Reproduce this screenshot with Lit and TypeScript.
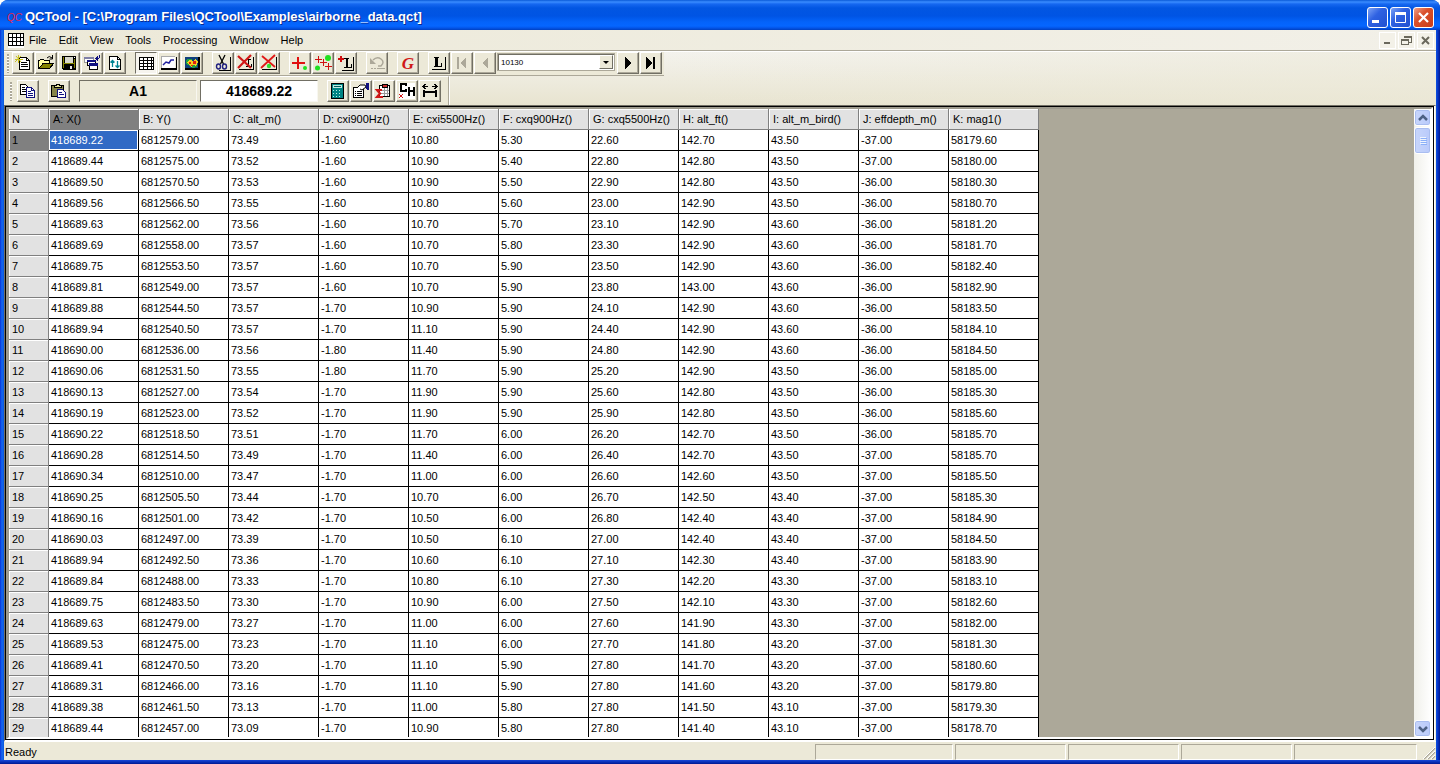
import { LitElement, html, css, svg, nothing } from "lit";
import { customElement, property } from "lit/decorators.js";
import { classMap } from "lit/directives/class-map.js";

/* 16 x 16 pixel glyphs used by the toolbars */
const GLYPHS: Record<string, unknown> = {
  new: svg`
    <path d="M4.500 2.500h7l3 3v9h-10z" fill="#fff" stroke="#000" />
    <path d="M11.500 2.500v3h3" fill="none" stroke="#000" />
    <path d="M6 7.500h6M6 9.500h7M6 11.500h7" stroke="#000" />
    <path d="M3.500 0v8M0 4.500h8M1 1l5 6M6 1L0 7" stroke="#c8c020" shape-rendering="auto" />`,
  open: svg`
    <path d="M.5 13.500v-8h1l1-1h3l1 1h5v3" fill="#ffffa0" stroke="#000" />
    <path d="M1 13.500l4-5h10.500l-4 5z" fill="#848400" stroke="#000" />
    <path d="M9 3q2-3 5 0M14.500 0v4h-3" fill="none" stroke="#000" shape-rendering="auto" />`,
  save: svg`
    <path d="M1.500 1.500h13v13h-12l-1-1z" fill="#000" stroke="#000" />
    <path d="M2 2h1v11H2zM13 4h1v9h-1zM3 8h10v1H3z" fill="#848400" />
    <rect x="4" y="2" width="8" height="6" fill="#d8d8cc" />
    <rect x="13" y="2" width="1" height="1" fill="#fff" />
    <rect x="9" y="11" width="2" height="3" fill="#e8e8e8" />`,
  cascade: svg`
    <path d="M.5 2.500h9v5h-9z" fill="#fff" stroke="#999" /><path d="M0 2h10v2H0z" fill="#8080a8" />
    <path d="M3.500 5.500h8v5h-8z" fill="#fff" stroke="#000" /><path d="M3 5h9v2H3z" fill="#101080" />
    <path d="M5.500 9.500h8v5h-8z" fill="#fff" stroke="#000" /><path d="M5 8h9v3H5z" fill="#101080" />
    <path d="M12 3.500h3M11.500 3.500l2-2v4zM15.500 0v3" stroke="#101080" fill="#101080" />`,
  reload: svg`
    <path d="M2.500 1.500h8l3 3v10h-11z" fill="#fff" stroke="#000" />
    <path d="M10.500 1.500v3h3" fill="none" stroke="#000" />
    <path d="M5.500 5v7M3.500 7.500l2-2 2 2M10.500 6v7M8.500 10.500l2 2 2-2" fill="none" stroke="#008494" stroke-width="1.300" shape-rendering="auto" />`,
  table: svg`
    <path d="M1 2h14v12H1z" fill="#fff" />
    <path d="M1 2.500h14M1 5.500h14M1 8.500h14M1 11.500h14M1.500 2v12M5.500 2v12M9.500 2v12M13.500 2v12" stroke="#000" />
    <path d="M1 14h15v1H1zM15 2h1v13h-1z" fill="#000" />`,
  chart: svg`
    <path d="M0 1h14v12H0z" fill="#fff" /><path d="M0 13h16v2H0zM15 2h1v13h-1z" fill="#000" />
    <path d="M0 1.500h14M.5 1v12" stroke="#aaa" />
    <path d="M2 10l3-3 3 1 2-3h3" fill="none" stroke="#2020a0" stroke-width="1.500" shape-rendering="auto" />`,
  map: svg`
    <path d="M1 2h14v12H1z" fill="#10407c" />
    <path d="M2 5q4-3 6 0t5-1v8l-4 1-7-4z" fill="#20a040" />
    <path d="M3 7l3-2 3 1 3-2 2 3-2 4-3-1-2 2-3-3z" fill="#f0d020" />
    <path d="M5 7h2v2H5zM9 6h3v3H9zM7 10h2v1H7z" fill="#e02010" />
    <path d="M1 13h15v2H1zM14 2h2v13h-2z" fill="#000" />`,
  cut: svg`
    <g shape-rendering="auto" fill="none">
      <path d="M4 0l4.500 9M10 0L5.500 9" stroke="#000" stroke-width="1.300" />
      <ellipse cx="3.500" cy="11.500" rx="2" ry="2.500" stroke="#202080" stroke-width="1.400" />
      <ellipse cx="9.500" cy="11.500" rx="2" ry="2.500" stroke="#202080" stroke-width="1.400" />
    </g><path d="M4 15h12v1H4zM15 2h1v14h-1z" fill="#000" />`,
  cutLine: svg`
    <path d="M1 14h15v1H1zM15 2h1v13h-1z" fill="#000" />
    <path d="M8 4.500h5M10.500 4v7M8 11.500h5V9" stroke="#000" fill="none" />
    <path d="M0 1l13 12M13 0L0 13" stroke="#d01818" stroke-width="2.200" shape-rendering="auto" />`,
  cutPoint: svg`
    <path d="M1 14h15v1H1zM15 2h1v13h-1z" fill="#000" />
    <path d="M1 1l13 11M14 0L0 13" stroke="#e01818" stroke-width="1.800" shape-rendering="auto" />
    <circle cx="8" cy="11" r="2.200" fill="#30e030" shape-rendering="auto" />`,
  addPoint: svg`
    <path d="M5 2h2v5h6v2H7v5H5V9H0V7h5z" fill="#e01010" />
    <circle cx="13" cy="13" r="2" fill="#20e020" shape-rendering="auto" />`,
  addPoints: svg`
    <circle cx="13" cy="3" r="3" fill="#20e020" shape-rendering="auto" />
    <circle cx="2.500" cy="13" r="2.500" fill="#20e020" shape-rendering="auto" />
    <path d="M3.500 1v7M0 4.500h7M8.500 4v7M5 7.500h7M13.500 8v7M10 11.500h7" stroke="#d01010" />`,
  addLine: svg`
    <path d="M2 1h2v2h2v2H4v2H2V5H0V3h2z" fill="#d01010" />
    <path d="M6 3h5v1h-1v8h3V9h1v4H6v-1h2V4H6z" fill="#000" />
    <path d="M4 15h12v1H4zM15 2h1v14h-1z" fill="#000" />`,
  undo: svg`
    <g shape-rendering="auto">
      <path d="M1 9V3l6 6z" fill="#aca899" />
      <path d="M4 5Q8 1 12 4t0 7H9" fill="none" stroke="#aca899" stroke-width="1.500" />
    </g><path d="M2 13.500h2m1 0h2m1 0h8" stroke="#aca899" />`,
  goto: svg`<text x="8" y="14" text-anchor="middle" class="g">G</text>`,
  line: svg`
    <path d="M3 2h5v1H7v8h3V8h1v4H3v-1h1V3H3z" fill="#000" />
    <path d="M1 14h14v1H1zM14 2h1v13h-1z" fill="#000" />`,
  first: svg`<path d="M3 2h2v12H3zM12 2v12L6 8z" fill="#aca899" />`,
  prev: svg`<path d="M11 2v12L5 8z" fill="#aca899" />`,
  next: svg`<path d="M5 2v12l7-6z" fill="#000" />`,
  last: svg`<path d="M3 2v12l7-6zM10 2h2v12h-2z" fill="#000" />`,
  copy: svg`
    <path d="M.5 1.500h5l3 3v7h-8z" fill="#fff" stroke="#000" />
    <path d="M2 4.500h3M2 6.500h4M2 8.500h4" stroke="#000" />
    <path d="M6.500 4.500h5l3 3v7h-8z" fill="#fff" stroke="#101080" />
    <path d="M11.500 4.500v3h3M8 8.500h3M8 10.500h5M8 12.500h5" stroke="#101080" fill="none" />`,
  paste: svg`
    <path d="M.5 2.500h12v11H.5z" fill="#848448" stroke="#000" />
    <path d="M3 4V2h2V1h3v1h2v2z" fill="#e8e4a0" stroke="#000" />
    <path d="M6.500 6.500h5l3 3v5h-8z" fill="#fff" stroke="#101080" />
    <path d="M8 9.500h3M8 11.500h5" stroke="#101080" />`,
  calc: svg`
    <path d="M1.500 .5h12v15h-12z" fill="#008484" stroke="#000" />
    <path d="M3 2h9v3H3z" fill="#c0e8e0" /><path d="M4 3h7v1H4z" fill="#006060" />
    <path d="M3 7.500h9M3 10.500h9M3 13.500h9" stroke="#b8f0e8" stroke-dasharray="1 2" />`,
  props: svg`
    <path d="M.5 4.500h10v10H.5z" fill="#fff" stroke="#000" />
    <path d="M2 8.500h1M4 8.500h5M2 10.500h1M4 10.500h5M2 12.500h1M4 12.500h5" stroke="#000" />
    <path d="M4 5l3-3h5l1 2-4 3-2-1" fill="#fff" stroke="#000" shape-rendering="auto" />
    <path d="M13 0h3v7h-2l-1-2z" fill="#101080" />`,
  sum: svg`
    <path d="M3.500 2.500h10v11h-10z" fill="#fff" stroke="#000" />
    <path d="M6 4V1h5v3z" fill="#c83030" stroke="#000" />
    <path d="M5 7.500h8M5 10.500h8M8.500 5v8M11.500 5v8" stroke="#999" />
    <path d="M6 7H1l3 3.500L1 14h6" fill="none" stroke="#d01818" stroke-width="2.200" shape-rendering="auto" />`,
  channel: svg`
    <path d="M0 0h16v16H0z" fill="#fff" />
    <path d="M7 3V1H2v7h5V6M10 4v9M15 4v9M10 8h5" fill="none" stroke="#000" stroke-width="2" />
    <path d="M0 11l4 4M4 11l-4 4" stroke="#d01818" shape-rendering="auto" />`,
  span: svg`
    <path d="M2 7v7M14 7v7M1 9h14" stroke="#000" stroke-width="2" />
    <path d="M1 3.500h5M10 3.500h5M3.500 1L1 3.500 3.500 6M12.500 1L15 3.500 12.500 6" stroke="#000" fill="none" />`,
};

@customElement("tool-button")
export class ToolButton extends LitElement {
  @property() icon = "";
  @property() label = "";
  @property({ type: Boolean }) pressed = false;
  @property({ type: Boolean }) disabled = false;

  static styles = css`
    :host { display: block; }
    .btn {
      display: grid;
      place-items: center;
      box-sizing: border-box;
      width: 22px;
      height: 22px;
      padding: 0;
      background: #ece9d8;
      border: 1px solid;
      border-color: #fff #716f64 #716f64 #fff;
      box-shadow: inset -1px -1px #aca899;
    }
    .pressed {
      background: #f6f4ee;
      border-color: #716f64 #fff #fff #716f64;
      box-shadow: none;
    }
    .icon { display: block; width: 16px; height: 16px; overflow: visible; }
    .g { font: italic bold 17px "Liberation Serif", serif; fill: #d01818; }
  `;

  render() {
    return html`<button
      class=${classMap({ btn: true, pressed: this.pressed })}
      aria-label=${this.label}
      ?disabled=${this.disabled}
    >
      <svg class="icon" viewBox="0 0 16 16" shape-rendering="crispEdges" aria-hidden="true">
        ${GLYPHS[this.icon] ?? nothing}
      </svg>
    </button>`;
  }
}

const HEADERS = ["A: X()", "B: Y()", "C: alt_m()", "D: cxi900Hz()", "E: cxi5500Hz()", "F: cxq900Hz()",
  "G: cxq5500Hz()", "H: alt_ft()", "I: alt_m_bird()", "J: effdepth_m()", "K: mag1()"];

const ROWS = `
418689.22 6812579.00 73.49 -1.60 10.80 5.30 22.60 142.70 43.50 -37.00 58179.60
418689.44 6812575.00 73.52 -1.60 10.90 5.40 22.80 142.80 43.50 -37.00 58180.00
418689.50 6812570.50 73.53 -1.60 10.90 5.50 22.90 142.80 43.50 -36.00 58180.30
418689.56 6812566.50 73.55 -1.60 10.80 5.60 23.00 142.90 43.50 -36.00 58180.70
418689.63 6812562.00 73.56 -1.60 10.70 5.70 23.10 142.90 43.60 -36.00 58181.20
418689.69 6812558.00 73.57 -1.60 10.70 5.80 23.30 142.90 43.60 -36.00 58181.70
418689.75 6812553.50 73.57 -1.60 10.70 5.90 23.50 142.90 43.60 -36.00 58182.40
418689.81 6812549.00 73.57 -1.60 10.70 5.90 23.80 143.00 43.60 -36.00 58182.90
418689.88 6812544.50 73.57 -1.70 10.90 5.90 24.10 142.90 43.60 -36.00 58183.50
418689.94 6812540.50 73.57 -1.70 11.10 5.90 24.40 142.90 43.60 -36.00 58184.10
418690.00 6812536.00 73.56 -1.80 11.40 5.90 24.80 142.90 43.60 -36.00 58184.50
418690.06 6812531.50 73.55 -1.80 11.70 5.90 25.20 142.90 43.50 -36.00 58185.00
418690.13 6812527.00 73.54 -1.70 11.90 5.90 25.60 142.80 43.50 -36.00 58185.30
418690.19 6812523.00 73.52 -1.70 11.90 5.90 25.90 142.80 43.50 -36.00 58185.60
418690.22 6812518.50 73.51 -1.70 11.70 6.00 26.20 142.70 43.50 -36.00 58185.70
418690.28 6812514.50 73.49 -1.70 11.40 6.00 26.40 142.70 43.50 -37.00 58185.70
418690.34 6812510.00 73.47 -1.70 11.00 6.00 26.60 142.60 43.50 -37.00 58185.50
418690.25 6812505.50 73.44 -1.70 10.70 6.00 26.70 142.50 43.40 -37.00 58185.30
418690.16 6812501.00 73.42 -1.70 10.50 6.00 26.80 142.40 43.40 -37.00 58184.90
418690.03 6812497.00 73.39 -1.70 10.50 6.10 27.00 142.40 43.40 -37.00 58184.50
418689.94 6812492.50 73.36 -1.70 10.60 6.10 27.10 142.30 43.40 -37.00 58183.90
418689.84 6812488.00 73.33 -1.70 10.80 6.10 27.30 142.20 43.30 -37.00 58183.10
418689.75 6812483.50 73.30 -1.70 10.90 6.00 27.50 142.10 43.30 -37.00 58182.60
418689.63 6812479.00 73.27 -1.70 11.00 6.00 27.60 141.90 43.30 -37.00 58182.00
418689.53 6812475.00 73.23 -1.70 11.10 6.00 27.70 141.80 43.20 -37.00 58181.30
418689.41 6812470.50 73.20 -1.70 11.10 5.90 27.80 141.70 43.20 -37.00 58180.60
418689.31 6812466.00 73.16 -1.70 11.10 5.90 27.80 141.60 43.20 -37.00 58179.80
418689.38 6812461.50 73.13 -1.70 11.00 5.80 27.80 141.50 43.10 -37.00 58179.30
418689.44 6812457.00 73.09 -1.70 10.90 5.80 27.80 141.40 43.10 -37.00 58178.70
`.trim().split("\n").map((line) => line.split(" "));

@customElement("data-grid")
export class DataGrid extends LitElement {
  static styles = css`
    :host { display: block; min-width: 0; overflow: hidden; background: #aca899; }
    .grid {
      width: 1030px;
      table-layout: fixed;
      border-collapse: separate;
      border-spacing: 0;
      font: 11px/20px "Liberation Sans", Arial, sans-serif;
      color: #000;
    }
    .index { width: 40px; }
    .head, .cell {
      box-sizing: border-box;
      height: 21px;
      padding: 0 2px;
      text-align: left;
      font-weight: normal;
      white-space: nowrap;
      overflow: hidden;
    }
    .head {
      padding: 0 3px;
      background: #e2e2e2;
      border-right: 1px solid #808080;
      border-bottom: 1px solid #808080;
      box-shadow: inset 1px 1px #fff;
    }
    .col { padding: 0 4px; }
    .on { background: #808080; }
    .cell { background: #fff; border-right: 1px solid #000; border-bottom: 1px solid #000; }
    .selected { background: #316ac5; color: #fff; box-shadow: inset 0 0 0 1px #fff; }
  `;

  render() {
    return html`<table class="grid">
      <colgroup><col class="index" />${HEADERS.map(() => html`<col />`)}</colgroup>
      <thead>
        <tr>
          <th class="head" scope="col">N</th>
          ${HEADERS.map((h, i) => html`<th scope="col" class=${classMap({ head: true, col: true, on: i === 0 })}>${h}</th>`)}
        </tr>
      </thead>
      <tbody>
        ${ROWS.map((row, r) => html`<tr>
          <th scope="row" class=${classMap({ head: true, on: r === 0 })}>${r + 1}</th>
          ${row.map((v, c) => html`<td class=${classMap({ cell: true, selected: r === 0 && c === 0 })}>${v}</td>`)}
        </tr>`)}
      </tbody>
    </table>`;
  }
}

type Tool = [icon: string, label: string, state?: "pressed" | "disabled"];

const FILE_TOOLS: Tool[] = [["new", "New"], ["open", "Open"], ["save", "Save"], ["cascade", "Import"], ["reload", "Reload"]];
const VIEW_TOOLS: Tool[] = [["table", "Spreadsheet", "pressed"], ["chart", "Profile"], ["map", "Map"]];
const CUT_TOOLS: Tool[] = [["cut", "Cut"], ["cutLine", "Delete line"], ["cutPoint", "Delete point"]];
const ADD_TOOLS: Tool[] = [["addPoint", "Add point"], ["addPoints", "Add points"], ["addLine", "Add line"]];
const CELL_TOOLS: Tool[] = [["calc", "Calculator"], ["props", "Properties"], ["sum", "Statistics"], ["channel", "Delete channel"], ["span", "Column width"]];
const MENUS = ["File", "Edit", "View", "Tools", "Processing", "Window", "Help"];

@customElement("app-root")
export class AppRoot extends LitElement {
  static styles = css`
    :host {
      display: flex;
      flex-direction: column;
      height: 100vh;
      overflow: hidden;
      box-sizing: border-box;
      border-radius: 8px 8px 0 0;
      background:
        linear-gradient(#1848d8, #0a30b8 2px, #001890) bottom / 100% 4px no-repeat,
        linear-gradient(90deg, #0831d9, #166aee 2px, #0855dd 4px, #0855dd calc(100% - 4px), #0a40d8 calc(100% - 3px), #001890);
      font: 11px/14px "Liberation Sans", Arial, sans-serif;
      color: #000;
    }
    button { font: inherit; color: inherit; }

    .title {
      display: flex;
      align-items: center;
      gap: 2px;
      height: 30px;
      flex: none;
      box-sizing: border-box;
      padding: 4px 6px 0 7px;
      background: linear-gradient(#0a5ad8, #3a8cff 2px, #1668f0 4px, #0256e2 8px, #0054e4 16px, #0463fa 22px, #0566ff 26px, #0355e8 28px, #0040c0);
    }
    .logo { width: 16px; height: 16px; }
    .logo-text { font: italic 10px "Liberation Sans", Arial, sans-serif; fill: #e02850; }
    .caption {
      flex: 1;
      margin: 0;
      font: bold 13px/18px "Liberation Sans", Arial, sans-serif;
      color: #fff;
      text-shadow: 1px 1px #0a2a90;
      white-space: nowrap;
    }
    .win-buttons { display: flex; gap: 2px; }
    .win {
      display: grid;
      width: 21px;
      height: 21px;
      padding: 0;
      border: 1px solid #fff;
      border-radius: 3px;
      background: linear-gradient(135deg, #7da3f6, #2f62e2 40%, #2050d0);
    }
    .close { background: linear-gradient(135deg, #f0a088, #d9502c 40%, #c83c18); }
    .win-icon { width: 19px; height: 19px; }

    .chrome { margin: 0 4px; flex: none; background: linear-gradient(90deg, #ece9d8, #f2f0e8); }
    .menu { display: flex; align-items: center; height: 20px; padding: 0 2px 0 4px; }
    .doc { width: 16px; height: 16px; }
    .menu-item { margin: 0 2px 0 0; padding: 0 5px; border: 0; background: none; line-height: 18px; }
    .doc-buttons { display: flex; gap: 2px; margin-left: auto; }
    .doc-btn {
      width: 17px;
      height: 17px;
      padding: 0;
      border: 1px solid #fff;
      background: #f3f1e8;
    }
    .doc-icon { display: block; width: 14px; height: 15px; }

    .rebar {
      border-top: 1px solid #aca899;
      box-shadow: inset 0 1px #fff;
      background: linear-gradient(90deg, transparent 45%, rgba(236, 233, 216, 0.6)), linear-gradient(#f4f3ee, #e8e4d0);
    }
    .bar { display: flex; align-items: center; width: max-content; background: #ece9d8; box-sizing: border-box; }
    .bar-main {
      height: 25px;
      padding: 0 1px 0 3px;
      border-bottom: 1px solid #aca899;
      box-shadow: inset 0 1px #fff;
    }
    .bar-cell { height: 29px; padding: 0 6px; border-top: 1px solid #fff; border-right: 1px solid #aca899; box-shadow: 1px 0 #fff; }
    .grip { width: 2px; height: 19px; background: repeating-linear-gradient(#aca899 0 2px, #fff 2px 3px); margin-right: 3px; }
    .grip-cell { margin-right: 5px; }
    .group { display: flex; gap: 1px; margin-right: 9px; }
    .group-end { margin-right: 1px; }
    .apart { gap: 9px; }

    .combo { display: grid; grid-template-columns: 1fr 16px; width: 118px; height: 18px; margin: 0 2px 2px 0; align-items: center; }
    .combo-box {
      grid-area: 1 / 1 / 2 / 3;
      height: 18px;
      box-sizing: border-box;
      width: 100%;
      appearance: none;
      margin: 0;
      padding: 1px 3px 0;
      border: 1px solid #aca899;
      border-radius: 0;
      box-shadow: inset 1px 1px #716f64;
      background: #fff;
      color: #000;
      font: 8px/15px "Liberation Sans", Arial, sans-serif;
    }
    .combo-arrow {
      grid-area: 1 / 2;
      z-index: 1;
      width: 14px;
      height: 14px;
      box-sizing: border-box;
      border: 1px solid;
      border-color: #fff #716f64 #716f64 #fff;
      background: #ece9d8;
      pointer-events: none;
    }
    .field {
      box-sizing: border-box;
      width: 118px;
      height: 22px;
      margin: 0;
      padding: 0;
      border: 1px solid;
      border-color: #716f64 #f8f7f0 #f8f7f0 #716f64;
      border-radius: 0;
      background: #ece9d8;
      text-align: center;
      color: #000;
      font: bold 14px/20px "Liberation Sans", Arial, sans-serif;
    }
    .name { margin-right: 3px; }
    .value { background: #fff; margin-right: 9px; }

    .client {
      flex: 1;
      min-height: 0;
      display: flex;
      margin: 0 4px;
      border: 1px solid;
      border-color: #716f64 #ece9d8 #fff #716f64;
      border-bottom-width: 2px;
      background: #fff;
    }
    .view {
      flex: 1;
      min-width: 0;
      display: flex;
      border: 1px solid #000;
      margin-right: 1px;
    }
    .pane {
      flex: 1;
      min-width: 0;
      display: flex;
      border: 2px solid;
      border-color: #9c998c #fff #fff #9c998c;
      border-left-width: 3px;
    }
    .sheet { flex: 1; }
    .scroll {
      display: flex;
      flex-direction: column;
      width: 17px;
      gap: 1px;
      background: linear-gradient(90deg, #f0f0ea, #fff);
    }
    .scroll-btn, .thumb {
      display: grid;
      place-items: center;
      box-sizing: border-box;
      flex: none;
      width: 17px;
      height: 17px;
      padding: 0;
      border: 1px solid #fff;
      border-radius: 3px;
      background: linear-gradient(90deg, #c8d6fb, #b9cafb);
      box-shadow: inset 0 0 0 1px #a9bdf0;
    }
    .thumb { height: 27px; }
    .down { margin-top: auto; }
    .scroll-icon { width: 10px; height: 10px; }

    .status {
      display: flex;
      gap: 2px;
      flex: none;
      height: 18px;
      box-sizing: border-box;
      margin: 0 4px 4px;
      padding: 2px 0 0 1px;
      background: #ece9d8;
    }
    .message { flex: 1; line-height: 16px; }
    .slot { width: 109px; border: 1px solid; border-color: #aca899 #fff #fff #aca899; }
    .slot-mode { width: 136px; }
    .slot-last { width: 121px; }
    .resize { width: 17px; height: 16px; }
  `;

  private tools(list: Tool[], cls = "") {
    return html`<div class="group ${cls}">
      ${list.map(([icon, label, state]) => html`<tool-button
        .icon=${icon}
        .label=${label}
        .pressed=${state === "pressed"}
        .disabled=${state === "disabled"}
      ></tool-button>`)}
    </div>`;
  }

  render() {
    return html`
      <header class="title">
        <svg class="logo" viewBox="0 0 16 16" aria-hidden="true">
          <text class="logo-text" x="0" y="12">QC</text>
        </svg>
        <h1 class="caption">QCTool - [C:\\Program Files\\QCTool\\Examples\\airborne_data.qct]</h1>
        <div class="win-buttons">
          <button class="win" aria-label="Minimize">
            <svg class="win-icon" viewBox="0 0 19 19"><path d="M4 12h7v3H4z" fill="#fff" /></svg>
          </button>
          <button class="win" aria-label="Maximize">
            <svg class="win-icon" viewBox="0 0 19 19"><path d="M4.500 5v9.500h10V5M4 5h11" fill="none" stroke="#fff" /><path d="M4 4h11v3H4z" fill="#fff" /></svg>
          </button>
          <button class="win close" aria-label="Close">
            <svg class="win-icon" viewBox="0 0 19 19"><path d="M5 5l9 9M14 5l-9 9" stroke="#fff" stroke-width="2.200" /></svg>
          </button>
        </div>
      </header>

      <div class="chrome">
        <nav class="menu">
          <svg class="doc" viewBox="0 0 16 16" shape-rendering="crispEdges" aria-hidden="true">
            <path d="M0 1h16v15H0z" fill="#fff" />
            <path d="M0 1.500h15M0 5.500h15M0 9.500h15M.5 1v13M4.500 1v13M8.500 1v13M12.500 1v13" stroke="#000" />
            <path d="M0 13h16v1H0zM15 1h1v13h-1z" fill="#000" />
          </svg>
          ${MENUS.map((m) => html`<button class="menu-item">${m}</button>`)}
          <div class="doc-buttons">
            <button class="doc-btn" aria-label="Minimize document">
              <svg class="doc-icon" viewBox="0 0 14 15"><path d="M4 9h6v2H4z" fill="#6a685c" /></svg>
            </button>
            <button class="doc-btn" aria-label="Restore document">
              <svg class="doc-icon" viewBox="0 0 14 15" shape-rendering="crispEdges">
                <path d="M5 5V3.500h7V9h-2M2.500 6.500h7v5h-7z" fill="none" stroke="#6a685c" /><path d="M5 3h7v2H5zM2 6h8v2H2z" fill="#6a685c" />
              </svg>
            </button>
            <button class="doc-btn" aria-label="Close document">
              <svg class="doc-icon" viewBox="0 0 14 15"><path d="M4 4l7 7M11 4l-7 7" stroke="#6a685c" stroke-width="2" /></svg>
            </button>
          </div>
        </nav>

        <div class="rebar">
          <div class="bar bar-main">
            <span class="grip"></span>
            ${this.tools(FILE_TOOLS)}
            ${this.tools(VIEW_TOOLS)}
            ${this.tools(CUT_TOOLS)}
            ${this.tools(ADD_TOOLS)}
            ${this.tools([["undo", "Undo", "disabled"], ["goto", "Go to"]], "apart")}
            ${this.tools([["line", "Line"], ["first", "First line", "disabled"], ["prev", "Previous line", "disabled"]], "group-end")}
            <label class="combo">
              <select class="combo-box" aria-label="Line number"><option>10130</option></select>
              <svg class="combo-arrow" viewBox="0 0 12 12" aria-hidden="true"><path d="M3 5h6L6 8z" fill="#000" /></svg>
            </label>
            ${this.tools([["next", "Next line"], ["last", "Last line"]], "group-end")}
          </div>
          <div class="bar bar-cell">
            <span class="grip grip-cell"></span>
            ${this.tools([["copy", "Copy"], ["paste", "Paste"]], "apart")}
            <input class="field name" aria-label="Cell" readonly .value=${"A1"} />
            <input class="field value" aria-label="Cell value" .value=${"418689.22"} />
            ${this.tools(CELL_TOOLS, "group-end")}
          </div>
        </div>
      </div>

      <main class="client">
        <div class="view">
          <div class="pane">
            <data-grid class="sheet"></data-grid>
            <div class="scroll">
              <button class="scroll-btn" aria-label="Scroll up">
                <svg class="scroll-icon" viewBox="0 0 10 10"><path d="M1 7l4-4 4 4" fill="none" stroke="#4d6185" stroke-width="2.500" /></svg>
              </button>
              <div class="thumb">
                <svg class="scroll-icon" viewBox="0 0 10 10" shape-rendering="crispEdges"><path d="M2 1.500h6M2 3.500h6M2 5.500h6M2 7.500h6" stroke="#eef4fe" /><path d="M3 2.500h6M3 4.500h6M3 6.500h6M3 8.500h6" stroke="#8cb0f8" /></svg>
              </div>
              <button class="scroll-btn down" aria-label="Scroll down">
                <svg class="scroll-icon" viewBox="0 0 10 10"><path d="M1 3l4 4 4-4" fill="none" stroke="#4d6185" stroke-width="2.500" /></svg>
              </button>
            </div>
          </div>
        </div>
      </main>

      <footer class="status">
        <span class="message">Ready</span>
        <span class="slot slot-mode"></span>
        <span class="slot"></span>
        <span class="slot"></span>
        <span class="slot"></span>
        <span class="slot slot-last"></span>
        <svg class="resize" viewBox="0 0 17 16" aria-hidden="true">
          <path d="M5 15L16 4M9 15l7-7M13 15l3-3" stroke="#aca899" stroke-width="1.500" />
          <path d="M4 15L16 3M8 15l8-8M12 15l4-4" stroke="#fff" />
        </svg>
      </footer>
    `;
  }
}
